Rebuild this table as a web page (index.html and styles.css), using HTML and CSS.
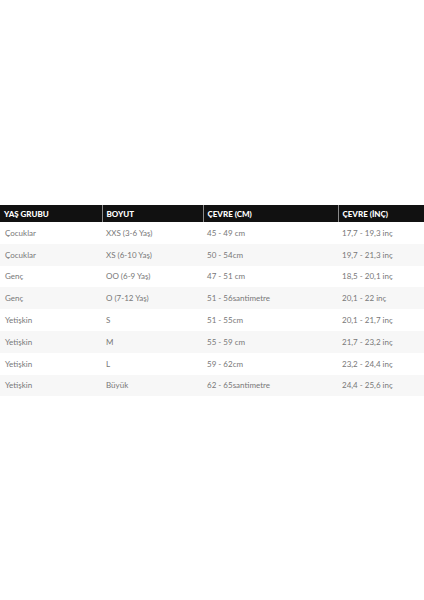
FILE: index.html
```html
<!DOCTYPE html>
<html lang="tr">
<head>
<meta charset="utf-8">
<title>Beden Tablosu</title>
<link rel="stylesheet" href="styles.css">
</head>
<body>
<div class="page">
<table class="size-table">
<colgroup>
<col class="c1"><col class="c2"><col class="c3"><col class="c4">
</colgroup>
<thead>
<tr><th>YAŞ GRUBU</th><th>BOYUT</th><th>ÇEVRE (CM)</th><th>ÇEVRE (İNÇ)</th></tr>
</thead>
<tbody>
<tr><td>Çocuklar</td><td>XXS (3-6 Yaş)</td><td>45 - 49 cm</td><td>17,7 - 19,3 inç</td></tr>
<tr><td>Çocuklar</td><td>XS (6-10 Yaş)</td><td>50 - 54cm</td><td>19,7 - 21,3 inç</td></tr>
<tr><td>Genç</td><td>OO (6-9 Yaş)</td><td>47 - 51 cm</td><td>18,5 - 20,1 inç</td></tr>
<tr><td>Genç</td><td>O (7-12 Yaş)</td><td>51 - 56santimetre</td><td>20,1 - 22 inç</td></tr>
<tr><td>Yetişkin</td><td>S</td><td>51 - 55cm</td><td>20,1 - 21,7 inç</td></tr>
<tr><td>Yetişkin</td><td>M</td><td>55 - 59 cm</td><td>21,7 - 23,2 inç</td></tr>
<tr><td>Yetişkin</td><td>L</td><td>59 - 62cm</td><td>23,2 - 24,4 inç</td></tr>
<tr><td>Yetişkin</td><td>Büyük</td><td>62 - 65santimetre</td><td>24,4 - 25,6 inç</td></tr>
</tbody>
</table>
</div>
</body>
</html>
```

FILE: styles.css
```css
html, body {
  margin: 0;
  padding: 0;
  background: #ffffff;
}
.page {
  width: 424px;
  height: 600px;
  padding-top: 205px;
  box-sizing: border-box;
  overflow: hidden;
}
.size-table {
  width: 428px;
  border-collapse: collapse;
  table-layout: fixed;
  font-family: "Lato", "Open Sans", sans-serif;
}
.c1 { width: 102px; }
.c2 { width: 101px; }
.c3 { width: 135px; }
.c4 { width: 90px; }
.size-table th {
  background: #111111;
  color: #ffffff;
  font-size: 8px;
  font-weight: 900;
  text-align: left;
  height: 17px;
  padding: 0 4px;
  border-left: 1px solid #8a8a8a;
}
.size-table th:first-child {
  border-left: none;
}
.size-table td {
  height: 21.8px;
  padding: 0 4px;
  font-size: 8px;
  color: #777777;
  line-height: 1;
}
.size-table td:first-child { padding-left: 5px; }
.size-table tbody tr:nth-child(even) td {
  background: #f7f7f7;
}
```
